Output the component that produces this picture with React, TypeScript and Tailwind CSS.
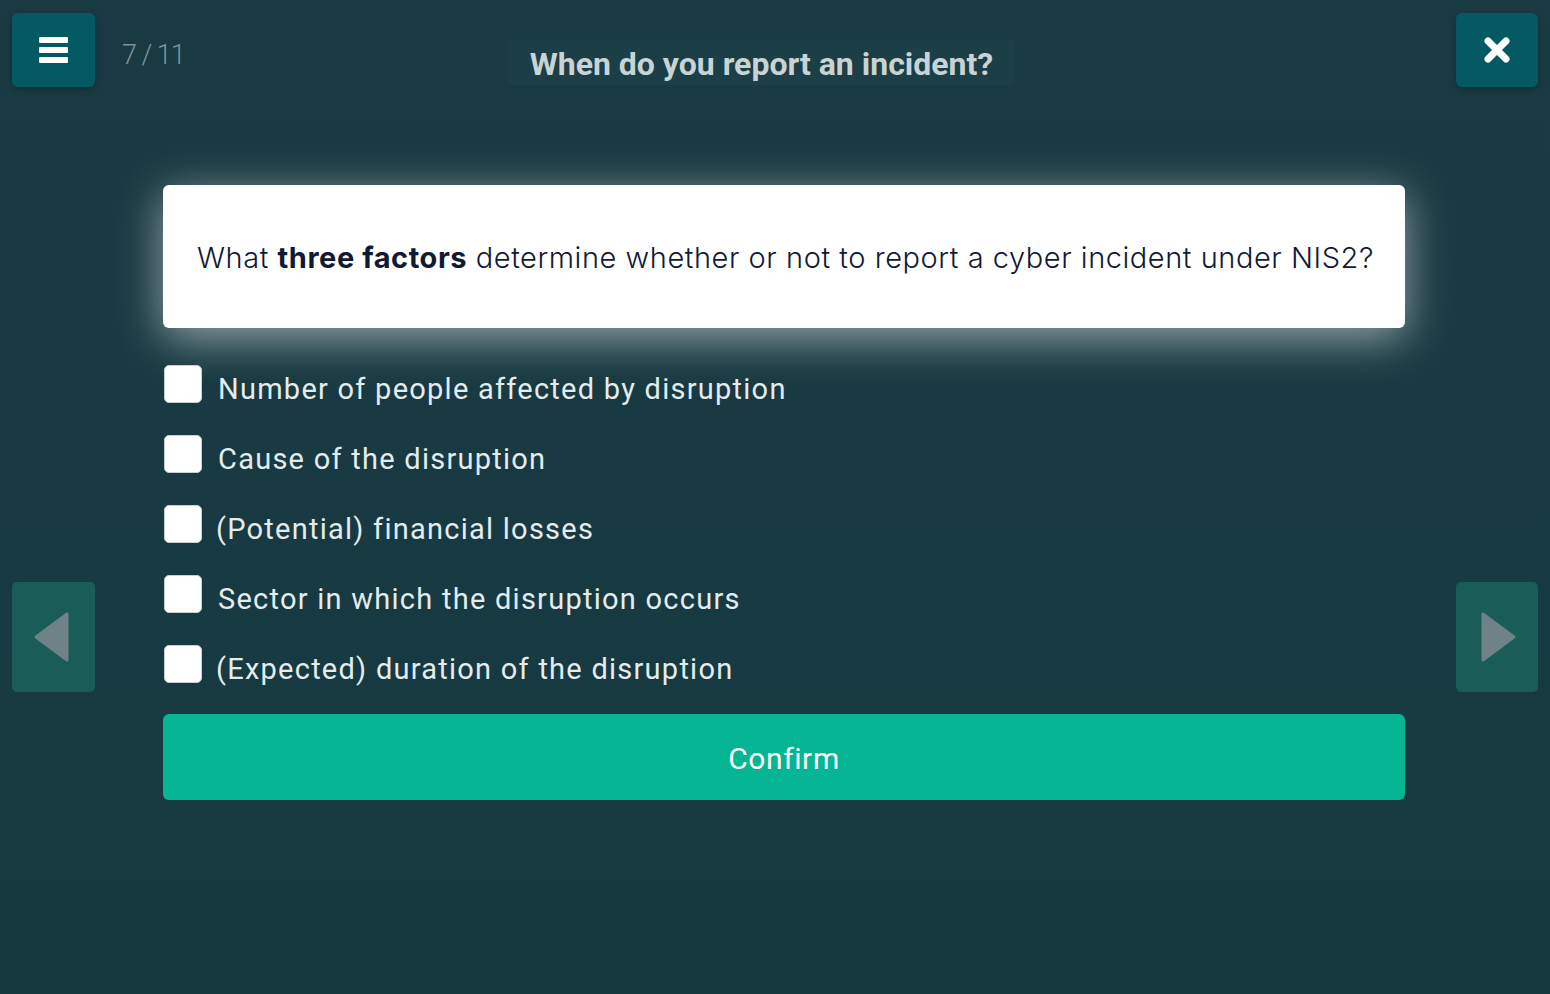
import { useState } from 'react';

const options = [
  'Number of people affected by disruption',
  'Cause of the disruption',
  '(Potential) financial losses',
  'Sector in which the disruption occurs',
  '(Expected) duration of the disruption',
];

export default function App() {
  const [checked, setChecked] = useState<boolean[]>(options.map(() => false));

  function toggle(i: number) {
    setChecked((prev) => prev.map((v, j) => (j === i ? !v : v)));
  }

  return (
    <div className="w-[1550px] h-[994px] overflow-hidden bg-gradient-to-b from-[#1a3a43] to-[#163940] font-['Roboto',sans-serif]">
      {/* Header */}
      <div className="flex items-start px-[12px] pt-[13px]">
        <button className="w-[83px] h-[74px] rounded-[6px] bg-[#045a62] flex items-center justify-center shadow-[0_2px_6px_rgba(0,0,0,0.25)]">
          <div className="flex flex-col gap-[4px]">
            <div className="w-[29px] h-[6px] bg-white rounded-[1px]" />
            <div className="w-[29px] h-[6px] bg-white rounded-[1px]" />
            <div className="w-[29px] h-[6px] bg-white rounded-[1px]" />
          </div>
        </button>
        <div className="w-[413px] pl-[27px] pt-[29px] text-[27px] font-light text-[#7f9399] leading-none tracking-[-1px]">
          7 / 11
        </div>
        <div className="w-[507px] h-[45px] mt-[27px] bg-[#1c3e46] flex items-center justify-center">
          <h1 className="text-[32px] font-bold text-[#c8d3d6] leading-none pt-[2px]">
            When do you report an incident?
          </h1>
        </div>
        <div className="flex-1" />
        <button className="w-[82px] h-[74px] rounded-[6px] bg-[#045a62] flex items-center justify-center shadow-[0_2px_6px_rgba(0,0,0,0.25)]">
          <svg width="28" height="28" viewBox="0 0 28 28">
            <path d="M5 5 L23 23 M23 5 L5 23" stroke="white" strokeWidth="7" strokeLinecap="round" />
          </svg>
        </button>
      </div>

      {/* Body */}
      <div className="flex px-[12px]">
        <div className="w-[83px] pt-[495px]">
          <button className="w-[83px] h-[110px] rounded-[5px] bg-[#195c58] flex items-center justify-center pr-[6px]">
            <svg width="36" height="50" viewBox="0 0 36 50">
              <path d="M34 2 L34 48 L3 25 Z" fill="#6e8288" strokeLinejoin="round" stroke="#6e8288" strokeWidth="3" />
            </svg>
          </button>
        </div>

        <div className="w-[1242px] ml-[68px] pt-[98px]">
          <div className="h-[143px] bg-white rounded-[6px] flex items-center pl-[34px] shadow-[0_10px_45px_rgba(255,255,255,0.55)]">
            <p className="text-[29px] text-[#111a33] leading-none font-['Inter',sans-serif] font-light tracking-[0.55px] pt-[2px]">
              What <span className="font-bold">three factors</span> determine whether or not to report a cyber incident under NIS2?
            </p>
          </div>

          <div className="flex flex-col gap-[33px] mt-[37px]">
            {options.map((opt, i) => (
              <label key={opt} className="flex items-center h-[37px] cursor-pointer" onClick={() => toggle(i)}>
                <span className="w-[38px] h-[38px] rounded-[5px] bg-white border border-[#c9cfd2] flex items-center justify-center shrink-0 ml-[1px]">
                  {checked[i] && (
                    <svg width="24" height="24" viewBox="0 0 24 24">
                      <path d="M4 12 L10 18 L20 6" stroke="#05b594" strokeWidth="3" fill="none" />
                    </svg>
                  )}
                </span>
                <span className={`${opt.startsWith('(') ? 'ml-[14px]' : 'ml-[16px]'} text-[29px] text-[#e3ecee] leading-none pt-[12px] tracking-[1.25px]`}>
                  {opt}
                </span>
              </label>
            ))}
          </div>

          <button className="w-full h-[86px] mt-[32px] rounded-[6px] bg-[#05b594] text-white text-[30px] leading-none tracking-[0.6px] pt-[4px]">
            Confirm
          </button>
        </div>

        <div className="flex-1" />
        <div className="w-[82px] pt-[495px]">
          <button className="w-[82px] h-[110px] rounded-[5px] bg-[#195c58] flex items-center justify-center pl-[4px]">
            <svg width="36" height="50" viewBox="0 0 36 50">
              <path d="M2 2 L2 48 L33 25 Z" fill="#6e8288" strokeLinejoin="round" stroke="#6e8288" strokeWidth="3" />
            </svg>
          </button>
        </div>
      </div>
    </div>
  );
}
